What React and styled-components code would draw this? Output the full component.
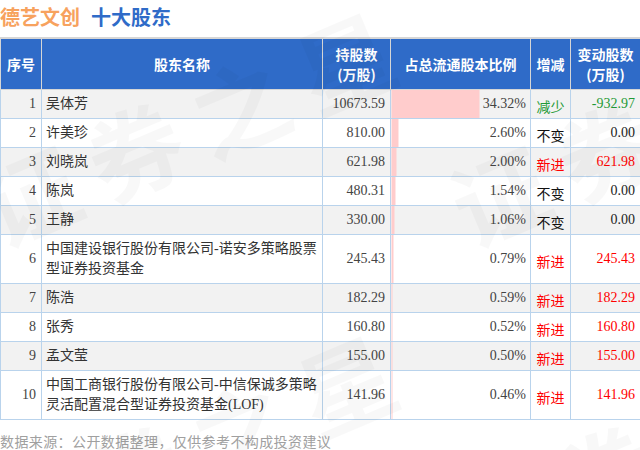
import React from 'react';
import styled, { createGlobalStyle } from 'styled-components';

const GlobalStyle = createGlobalStyle`
  body {
    margin: 0;
    background: #fff;
    font-family: 'Liberation Serif', 'Noto Sans CJK SC', serif;
  }
`;

const Page = styled.div`
  position: relative;
  width: 640px;
  height: 450px;
  overflow: hidden;
`;

const TitleBar = styled.div`
  display: flex;
  align-items: center;
  gap: 11px;
  height: 37px;
  font-family: 'Noto Sans CJK SC', sans-serif;
  font-size: 20px;
  font-weight: 700;
  line-height: 1;
`;

const TitleText = styled.span`
  color: ${(p) => p.$color};
  margin-top: -4px;
`;

const Table = styled.table`
  width: 640px;
  border-collapse: collapse;
  table-layout: fixed;
`;

const Th = styled.th`
  background: #2f6bc8;
  color: #fff;
  border: 1px solid #d6d6d6;
  border-top-width: 2px;
  font-family: 'Noto Sans CJK SC', sans-serif;
  font-size: 14px;
  font-weight: 700;
  line-height: 20px;
  padding: 5px 2px;
  height: 40px;
  text-align: center;
`;

const Td = styled.td`
  border: 1px solid #b9d3ec;
  padding: 4px 5px 4px 4px;
  font-size: 14px;
  line-height: 20px;
  color: ${(p) => p.$color || '#444'};
  text-align: ${(p) => p.$align || 'right'};
  vertical-align: middle;
`;

const NameCell = styled(Td)`
  color: #333;
  text-align: left;
  padding-left: 4px;
  padding-right: 2px;
`;

const RatioCell = styled(Td)`
  padding-right: 4px;
`;

const ChangeTag = styled(Td)`
  font-family: 'Noto Sans CJK SC', sans-serif;
  text-align: center;
  padding: 6px 0 2px;
`;

const Row = styled.tr`
  background: ${(p) => (p.$odd ? '#f2f2f2' : '#fff')};
`;

const Footer = styled.div`
  padding-top: 13px;
  font-family: 'Noto Sans CJK SC', sans-serif;
  font-size: 14px;
  line-height: 16px;
  color: #a0a0a0;
  letter-spacing: 0.4px;
  white-space: nowrap;
`;

const Watermark = styled.span`
  position: absolute;
  left: ${(p) => p.$x}px;
  top: ${(p) => p.$y}px;
  transform: translate(-50%, -50%) rotate(-23deg);
  font-family: 'Noto Sans CJK SC', sans-serif;
  font-size: 95px;
  font-weight: 700;
  letter-spacing: 19px;
  white-space: nowrap;
  color: rgba(0, 0, 0, 0.028);
  pointer-events: none;
`;

const holders = [
  { name: '吴体芳', shares: '10673.59', pct: 34.32, tag: '减少', change: '-932.97' },
  { name: '许美珍', shares: '810.00', pct: 2.6, tag: '不变', change: '0.00' },
  { name: '刘晓岚', shares: '621.98', pct: 2.0, tag: '新进', change: '621.98' },
  { name: '陈岚', shares: '480.31', pct: 1.54, tag: '不变', change: '0.00' },
  { name: '王静', shares: '330.00', pct: 1.06, tag: '不变', change: '0.00' },
  { name: '中国建设银行股份有限公司-诺安多策略股票型证券投资基金', shares: '245.43', pct: 0.79, tag: '新进', change: '245.43' },
  { name: '陈浩', shares: '182.29', pct: 0.59, tag: '新进', change: '182.29' },
  { name: '张秀', shares: '160.80', pct: 0.52, tag: '新进', change: '160.80' },
  { name: '孟文莹', shares: '155.00', pct: 0.5, tag: '新进', change: '155.00' },
  { name: '中国工商银行股份有限公司-中信保诚多策略灵活配置混合型证券投资基金(LOF)', shares: '141.96', pct: 0.46, tag: '新进', change: '141.96' },
];

const tagColor = {
  减少: '#1f9a36',
  不变: '#111',
  新进: '#f00',
};

const changeColor = {
  减少: '#1f9a36',
  不变: '#222',
  新进: '#f00',
};

export default function App() {
  return (
    <Page>
      <GlobalStyle />
      <TitleBar>
        <TitleText $color="#f7a25e">德艺文创</TitleText>
        <TitleText $color="#2f6bc8">十大股东</TitleText>
      </TitleBar>
      <Table>
        <colgroup>
          <col style={{ width: 41 }} />
          <col style={{ width: 281 }} />
          <col style={{ width: 68 }} />
          <col style={{ width: 140 }} />
          <col style={{ width: 40 }} />
          <col style={{ width: 70 }} />
        </colgroup>
        <thead>
          <tr>
            <Th>序号</Th>
            <Th>股东名称</Th>
            <Th>
              持股数
              <br />
              (万股)
            </Th>
            <Th>占总流通股本比例</Th>
            <Th>增减</Th>
            <Th>
              变动股数
              <br />
              (万股)
            </Th>
          </tr>
        </thead>
        <tbody>
          {holders.map((h, i) => (
            <Row key={h.name} $odd={i % 2 === 0}>
              <Td>{i + 1}</Td>
              <NameCell>{h.name}</NameCell>
              <Td>{h.shares}</Td>
              <RatioCell
                style={{
                  background: `linear-gradient(to right, #ffcccc ${(h.pct * 2.564).toFixed(1)}px, transparent ${(h.pct * 2.564).toFixed(1)}px)`,
                }}
              >
                {h.pct.toFixed(2)}%
              </RatioCell>
              <ChangeTag $color={tagColor[h.tag]}>{h.tag}</ChangeTag>
              <Td $color={changeColor[h.tag]}>{h.change}</Td>
            </Row>
          ))}
        </tbody>
      </Table>
      <Footer>数据来源：公开数据整理，仅供参考不构成投资建议</Footer>
      <Watermark $x={195} $y={122}>证券之星</Watermark>
      <Watermark $x={196} $y={445}>证券之星</Watermark>
      <Watermark $x={665} $y={122}>证券之星</Watermark>
      <Watermark $x={665} $y={445}>证券之星</Watermark>
    </Page>
  );
}
